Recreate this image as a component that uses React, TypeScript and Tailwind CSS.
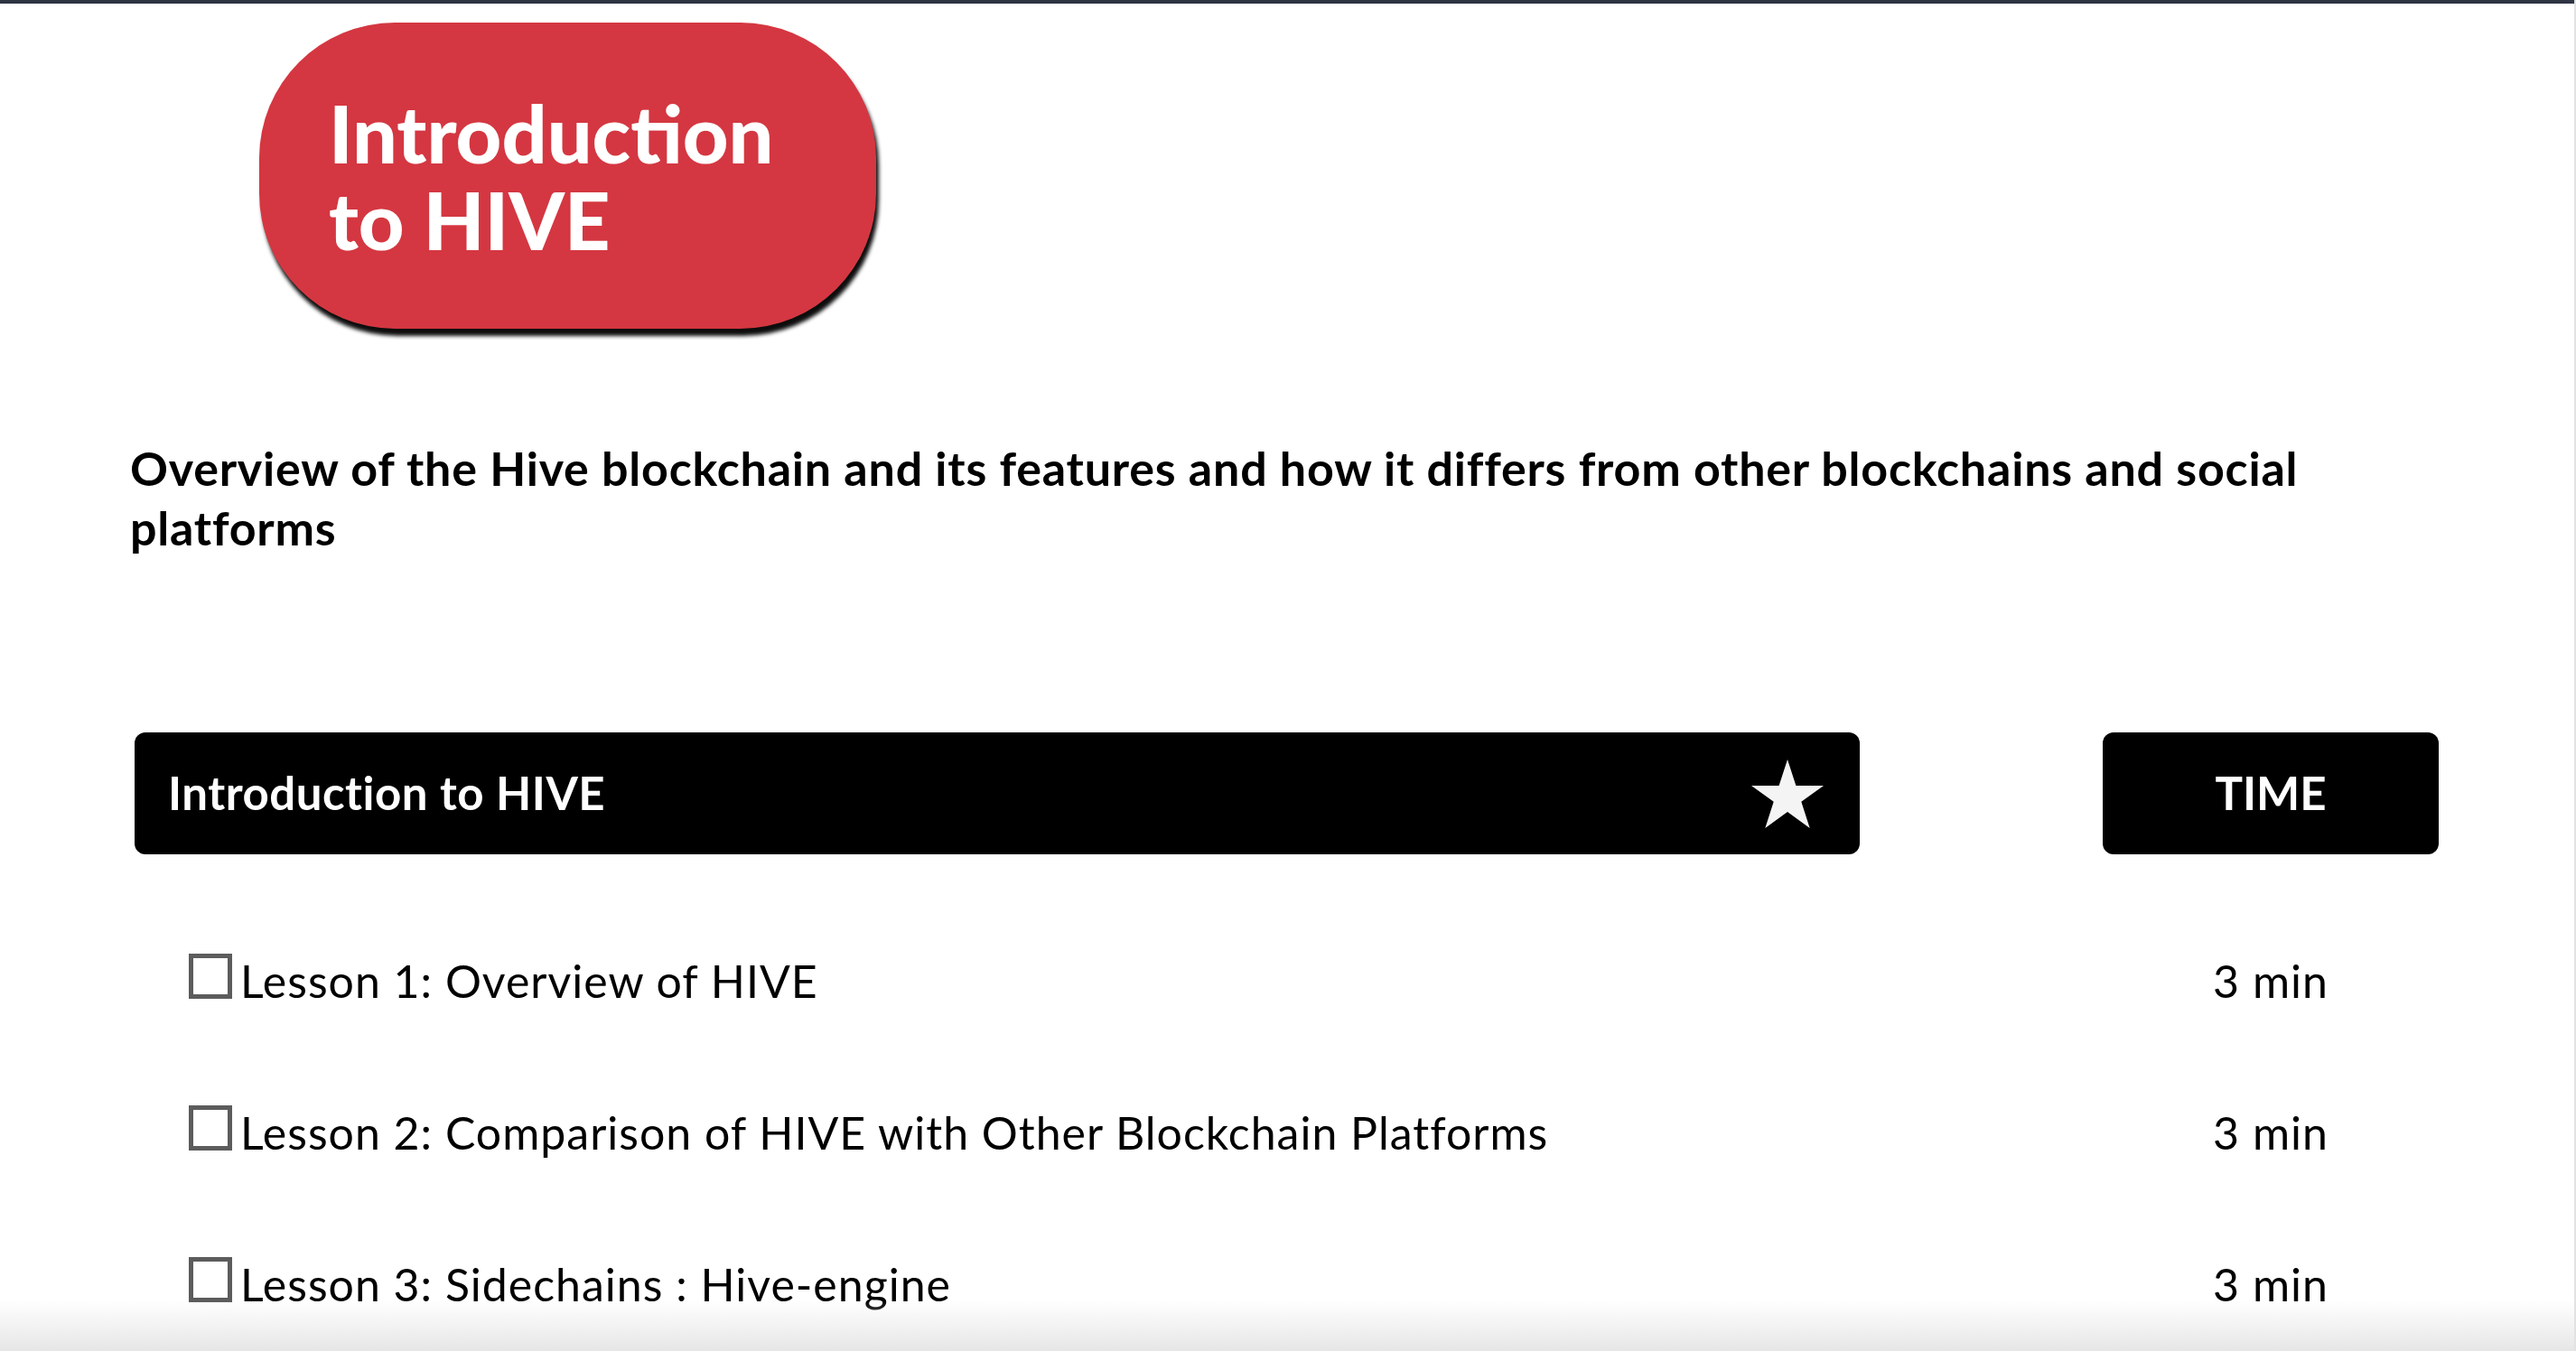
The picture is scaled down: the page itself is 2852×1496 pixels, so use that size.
import React from 'react'

const lessons = [
  { title: 'Lesson 1: Overview of HIVE', time: '3 min' },
  { title: 'Lesson 2: Comparison of HIVE with Other Blockchain Platforms', time: '3 min' },
  { title: 'Lesson 3: Sidechains : Hive-engine', time: '3 min' },
]

function Star() {
  return (
    <svg width="80" height="76" viewBox="0 0 80 76" aria-hidden="true">
      <polygon
        points="40,0 49.4,28.9 80,28.9 55.3,46.8 64.7,76 40,58 15.3,76 24.7,46.8 0,28.9 30.6,28.9"
        fill="#f4f4f4"
      />
    </svg>
  )
}

export default function App() {
  return (
    <div className="relative h-[1496px] w-full overflow-hidden border-r-2 border-[#e2e2e2] bg-white font-['Lato','Liberation_Sans',sans-serif] text-black">
      <div className="h-[4px] w-full bg-[#2f3443]" />

      <div className="ml-[287px] mt-[21px] flex h-[339px] w-[683px] items-center rounded-[150px] bg-[#d43741] pl-[77px] shadow-[3px_8px_4px_rgba(0,0,0,0.95)]">
        <h1 className="text-[88px] font-black leading-[96px] text-white">
          Introduction
          <br />
          to HIVE
        </h1>
      </div>

      <p className="ml-[144px] mt-[121px] w-[2520px] text-[52px] font-bold leading-[66px] tracking-[0.015em]">
        Overview of the Hive blockchain and its features and how it differs from other blockchains and social platforms
      </p>

      <div className="ml-[149px] mt-[194px] flex w-[2551px] gap-[269px]">
        <div className="flex h-[135px] flex-1 items-center justify-between rounded-[12px] bg-black pl-[37px] pr-[40px]">
          <span className="text-[51px] font-bold tracking-[0.01em] text-white">Introduction to HIVE</span>
          <Star />
        </div>
        <div className="flex h-[135px] w-[372px] items-center justify-center rounded-[12px] bg-black">
          <span className="text-[51px] font-bold text-white">TIME</span>
        </div>
      </div>

      <div className="ml-[149px] mt-[56px] w-[2551px]">
        {lessons.map((lesson) => (
          <div key={lesson.title} className="flex h-[168px] items-center gap-[269px]">
            <div className="flex flex-1 items-center pl-[60px]">
              <span className="mb-[10px] mr-[9px] box-border h-[50px] w-[48px] border-[5px] border-[#5c5c5c]" />
              <span className="text-[50px] leading-none tracking-[0.02em]">{lesson.title}</span>
            </div>
            <div className="flex w-[372px] justify-center">
              <span className="text-[50px] leading-none tracking-[0.02em]">{lesson.time}</span>
            </div>
          </div>
        ))}
      </div>

      <div className="pointer-events-none absolute bottom-0 left-0 h-[56px] w-full bg-gradient-to-b from-transparent to-[#e6e6e6]" />
    </div>
  )
}
